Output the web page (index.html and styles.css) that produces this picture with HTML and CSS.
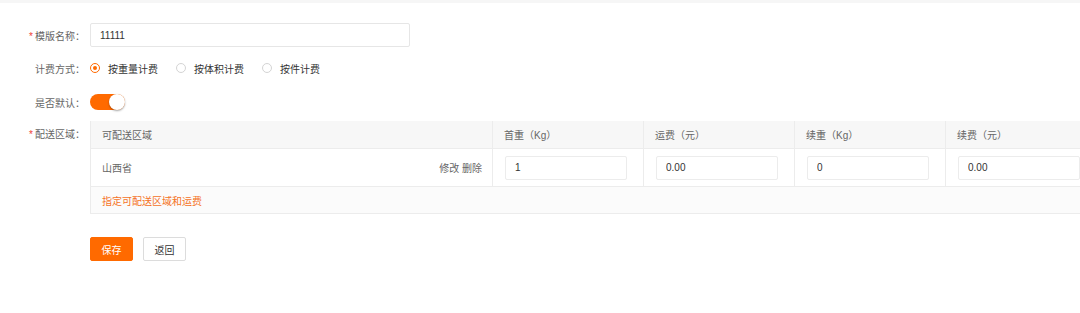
FILE: index.html
```html
<!DOCTYPE html>
<html lang="zh-CN">
<head>
  <meta charset="UTF-8">
  <meta name="viewport" content="width=device-width, initial-scale=1">
  <title>运费模版</title>
  <link rel="stylesheet" href="styles.css">
</head>
<body>
  <div class="top-strip"></div>
  <form class="tpl-form">
    <div class="form-item item-name">
      <label class="form-label required">模版名称：</label>
      <div class="form-control">
        <input class="input input-name" type="text" value="11111">
      </div>
    </div>

    <div class="form-item item-type">
      <label class="form-label">计费方式：</label>
      <div class="form-control radio-group">
        <span class="radio checked"><i class="radio-dot"></i>按重量计费</span>
        <span class="radio"><i class="radio-dot"></i>按体积计费</span>
        <span class="radio"><i class="radio-dot"></i>按件计费</span>
      </div>
    </div>

    <div class="form-item item-default">
      <label class="form-label">是否默认：</label>
      <div class="form-control">
        <span class="switch on"><i class="switch-knob"></i></span>
      </div>
    </div>

    <div class="form-item item-area">
      <label class="form-label required">配送区域：</label>
      <div class="form-control">
        <table class="area-table">
          <colgroup>
            <col class="col-area">
            <col class="col-num">
            <col class="col-num">
            <col class="col-num">
            <col class="col-num">
          </colgroup>
          <thead>
            <tr>
              <th>可配送区域</th>
              <th>首重（Kg）</th>
              <th>运费（元）</th>
              <th>续重（Kg）</th>
              <th>续费（元）</th>
            </tr>
          </thead>
          <tbody>
            <tr class="area-row">
              <td>
                <div class="area-cell">
                  <span>山西省</span>
                  <span class="area-ops"><a>修改</a> <a>删除</a></span>
                </div>
              </td>
              <td><input class="input input-cell" type="text" value="1"></td>
              <td><input class="input input-cell" type="text" value="0.00"></td>
              <td><input class="input input-cell" type="text" value="0"></td>
              <td><input class="input input-cell" type="text" value="0.00"></td>
            </tr>
            <tr class="add-row">
              <td colspan="5"><a class="add-link">指定可配送区域和运费</a></td>
            </tr>
          </tbody>
        </table>
      </div>
    </div>

    <div class="form-actions">
      <button type="button" class="btn btn-primary">保存</button>
      <button type="button" class="btn">返回</button>
    </div>
  </form>
</body>
</html>
```

FILE: styles.css
```css
body {
  margin: 0;
  background: #fff;
  font-family: "Liberation Sans", "Noto Sans CJK SC", sans-serif;
  font-size: 10px;
  color: #333;
  overflow: hidden;
}

.top-strip {
  height: 3px;
  background: #f6f6f6;
}

.tpl-form {
  padding-top: 20px;
}

.form-item {
  display: flex;
  align-items: center;
  min-height: 24px;
}

.item-type {
  margin-top: 9px;
}

.item-default {
  margin-top: 10px;
}

.item-area {
  margin-top: 7px;
  align-items: flex-start;
}

.form-label {
  width: 90px;
  padding-right: 5px;
  box-sizing: border-box;
  text-align: right;
  color: #666;
  flex-shrink: 0;
}

.form-label.required::before {
  content: "*";
  color: #f04134;
  margin-right: 2px;
}

.item-area .form-label {
  line-height: 27px;
}

.form-control {
  flex: 1;
  min-width: 0;
}

.input {
  box-sizing: border-box;
  height: 24px;
  border: 1px solid #e6e6e6;
  border-radius: 2px;
  padding: 0 9px;
  font-family: inherit;
  font-size: 10px;
  color: #333;
  background: #fff;
  outline: none;
}

.input-name {
  width: 320px;
}

/* radios */
.radio-group {
  display: flex;
  align-items: center;
  gap: 18px;
}

.radio {
  display: inline-flex;
  align-items: center;
  gap: 8px;
  color: #333;
}

.radio-dot {
  width: 10px;
  height: 10px;
  box-sizing: border-box;
  border: 1px solid #d4d4d4;
  border-radius: 50%;
  position: relative;
}

.radio.checked .radio-dot {
  border-color: #ff6a00;
}

.radio.checked .radio-dot::after {
  content: "";
  position: absolute;
  left: 2px;
  top: 2px;
  width: 4px;
  height: 4px;
  border-radius: 50%;
  background: #ff6a00;
}

/* switch */
.switch {
  display: inline-block;
  position: relative;
  width: 35px;
  height: 16px;
  border-radius: 8px;
  background: #ff6a00;
  vertical-align: middle;
}

.switch-knob {
  position: absolute;
  top: 0;
  right: 0;
  width: 16px;
  height: 16px;
  border-radius: 50%;
  background: #fff;
  box-shadow: 0 1px 2px rgba(0, 0, 0, 0.35);
}

/* area table */
.area-table {
  border-collapse: collapse;
  table-layout: fixed;
  width: 1006px;
  border-left: 1px solid #ebebeb;
}

.col-area {
  width: 402px;
}

.col-num {
  width: 151px;
}

.area-table th {
  height: 27px;
  padding: 0 11px;
  text-align: left;
  font-weight: normal;
  color: #666;
  background: #f7f7f7;
  border-right: 1px solid #ececec;
  border-bottom: 1px solid #ececec;
}

.area-table td {
  padding: 0 12px;
  border-right: 1px solid #ececec;
  border-bottom: 1px solid #ececec;
  color: #666;
}

.area-table td:first-child {
  padding: 0 10px 0 11px;
}

.area-row td {
  height: 37px;
}

.area-cell {
  display: flex;
  justify-content: space-between;
  align-items: center;
}

.area-ops a {
  color: #666;
}

.input-cell {
  width: 122px;
  border-color: #ececec;
}

.add-row td {
  height: 26px;
  background: #fbfbfb;
}

.add-link {
  color: #f5731f;
}

/* actions */
.form-actions {
  display: flex;
  gap: 10px;
  margin: 23px 0 0 90px;
}

.btn {
  height: 24px;
  width: 43px;
  padding: 0;
  border: 1px solid #dcdcdc;
  border-radius: 2px;
  background: #fff;
  color: #333;
  font-family: inherit;
  font-size: 10px;
  cursor: pointer;
}

.btn-primary {
  background: #ff6a00;
  border-color: #ff6a00;
  color: #fff;
}
```
